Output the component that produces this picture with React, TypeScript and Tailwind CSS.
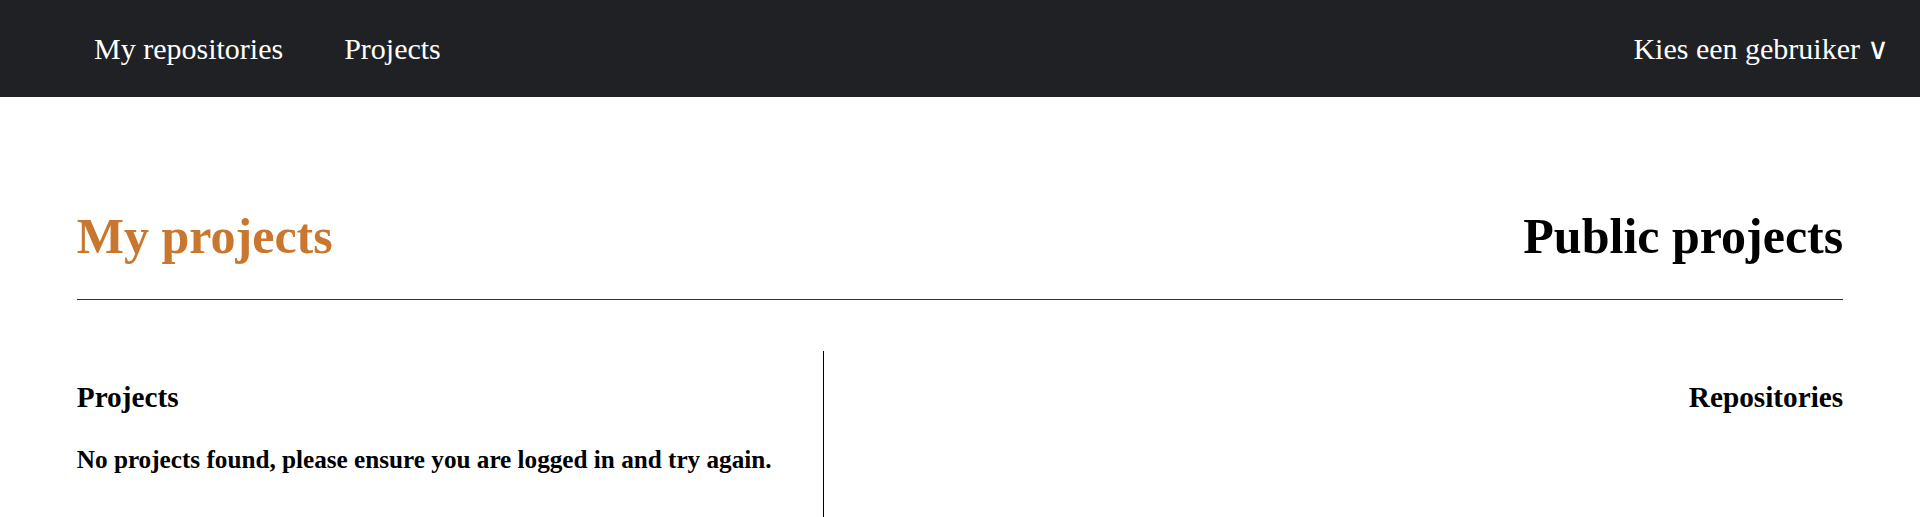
import React from 'react'

const serif = { fontFamily: '"Liberation Serif", "Times New Roman", serif' }

function NavBar() {
  return (
    <nav className="flex h-[97px] items-center justify-between bg-[#1f2125] pl-[94px] pr-[31px] text-[30px] text-white">
      <div className="flex items-center gap-[61px]">
        <a href="#">My repositories</a>
        <a href="#">Projects</a>
      </div>
      <button type="button" className="flex items-center">
        Kies een gebruiker <span className="ml-[7px] font-light">∨</span>
      </button>
    </nav>
  )
}

export default function App() {
  return (
    <div className="min-h-[517px] overflow-hidden bg-white text-[25px] text-black" style={serif}>
      <NavBar />
      <main className="mx-[4%]">
        <div className="flex items-center justify-between pt-[111px] text-[50px] font-bold leading-[57.5px]">
          <h1 className="text-[#c9772f]">My projects</h1>
          <h1>Public projects</h1>
        </div>
        <hr className="mt-[33px] border-t border-[#333]" />
        <div className="mt-[51px] flex min-h-[170px]">
          <section className="w-[747px] border-r border-black pt-[30px]">
            <h3 className="text-[29.25px] font-bold leading-[33.6px]">Projects</h3>
            <h4 className="mt-[32px] text-[25.2px] font-bold leading-[28.75px]">
              No projects found, please ensure you are logged in and try again.
            </h4>
          </section>
          <section className="flex-1 pt-[30px] text-right">
            <h3 className="text-[29.25px] font-bold leading-[33.6px]">Repositories</h3>
          </section>
        </div>
      </main>
    </div>
  )
}
